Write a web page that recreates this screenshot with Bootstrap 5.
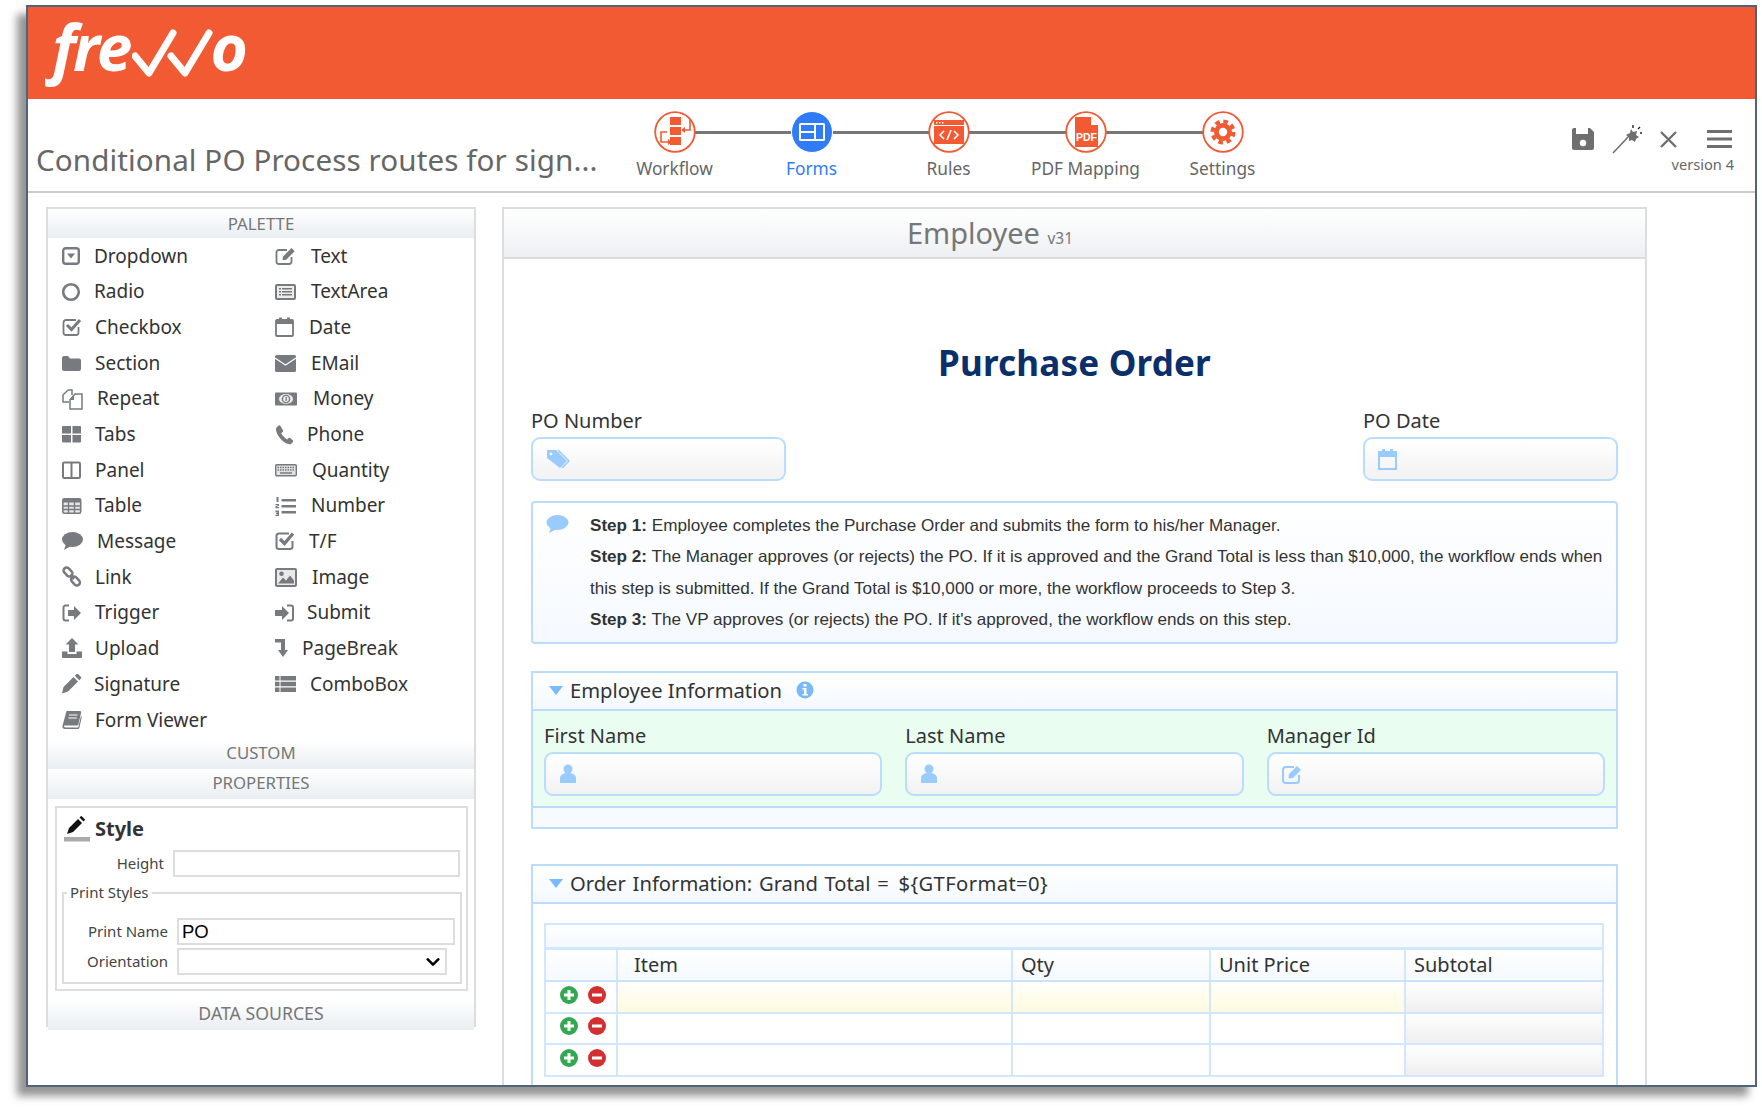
<!DOCTYPE html>
<html lang="en"><head><meta charset="utf-8"><title>frevvo</title>
<link href="https://cdn.jsdelivr.net/npm/bootstrap@5.3.0/dist/css/bootstrap.min.css" rel="stylesheet">
<style>
html,body{background:#fff;margin:0;height:1114px;overflow:hidden}
body{font-family:"Noto Sans",sans-serif;color:#333;padding:5px 5px 0 26px}
.appwin{height:1082px;width:1731px;border:2px solid #4f6379;box-shadow:-9px 9px 8px rgba(0,0,0,.42);background:#fff}
.brandbar{height:92px;background:#f15a33;padding:0 0 0 24px}
.logotxt{display:inline-block;font-family:"Open Sans",sans-serif;font-style:italic;font-weight:700;font-size:64px;line-height:80px;color:#fff;letter-spacing:-3px;padding:0 6px 0 8px;margin:0 -6px 0 -8px}
.logochecks{flex:none;margin:12px 0 0 3px}
.logoo{margin-left:-12px}
.toolbar{height:94px;border-bottom:2px solid #ccc;position:relative}
.flowtitle{font-size:29.6px;line-height:40px;color:#666;margin:41px 0 0 8px;width:569px;white-space:nowrap;letter-spacing:.1px}
.stepsrow{margin-left:1px;margin-top:12px}
.stepcell{width:137px;position:relative;text-align:center;color:#666;font-size:17.3px;line-height:24px}
.stepcell.activ{color:#2f7cf6}
.stepcell:not(:last-child)::before{content:"";position:absolute;left:68px;top:20px;width:137px;height:3px;background:#777}
.stepcirc{display:block;position:relative;margin:0 auto 4px;width:42px;height:42px}
.toolicons{margin-left:auto;padding-right:23px;width:183px;margin-top:26px}
.verlabel{font-size:14.6px;line-height:20px;color:#666;text-align:right;margin:-1px -2px 0 0}
.workarea{padding:14px 0 0 18px;height:892px;overflow:hidden}
.palpanel{width:430px;height:820px;border:2px solid #ddd;flex:none}
.panelhead{height:30px;line-height:28px;text-align:center;font-size:16.8px;color:#777;background:linear-gradient(#fff,#e9eef2)}
.palhead1{height:29px;line-height:30px}
.palgrid{display:grid;grid-template-columns:213px 200px;grid-auto-rows:35.7px;padding:0 0 3px 14px;height:502px}
.palitem{display:flex;align-items:center;font-size:19px;color:#333;white-space:nowrap}
.palitem svg{color:#777b7f;flex:none}
.palhead2{height:29px;line-height:26px}
.palhead3{height:30px;line-height:28px}
.palhead4{height:31px;line-height:28px;font-size:17.7px}
.stylebox{height:185px;margin:7px 6px 0 7px;border:2px solid #ddd;padding:8px 6px 0 7px}
.styletitle{font-weight:700;font-size:20px;line-height:26px;color:#333;height:34px}
.proplabel{font-size:15px;color:#444;text-align:right;flex:none}
.labh{width:100px}
.labp{width:104px}
.inh{width:287px}
.inp{width:278px;margin-left:9px}
.inq{width:270px;margin-left:9px}
.orow{margin-top:3px}
.propinput.form-control,.propsel.form-select{border:2px solid #ddd;border-radius:0;height:27px;min-height:0;padding:0 3px;font-family:"Liberation Sans",sans-serif;font-size:18.5px;color:#000;box-shadow:none}
.propsel.form-select{background-image:url("data:image/svg+xml,%3csvg xmlns='http://www.w3.org/2000/svg' viewBox='0 0 16 16'%3e%3cpath fill='none' stroke='%23000' stroke-width='3' stroke-linecap='round' stroke-linejoin='round' d='M2 5l6 6 6-6'/%3e%3c/svg%3e");background-size:14px 14px;background-position:right 5px center}
.prfield{border:2px solid #ddd;position:relative;margin:15px 0 0 -2px;height:92px;width:400px;padding-top:24px}
.prlegend{position:absolute;left:3px;top:-12px;background:#fff;padding:0 3px;font-size:15px;line-height:20px;color:#444}
.mainpanel{width:1145px;margin-left:26px;border:2px solid #ddd;border-bottom:0;height:1000px;padding:0 27px 0 27px;flex:none}
.mainhead{height:50px;margin:0 -27px 0 -27px;padding-right:169px;background:linear-gradient(#fff,#edf0f3);border-bottom:2px solid #ddd;line-height:48px;text-align:center;color:#777;font-size:29px}
.mainhead span{font-size:15.5px;margin-left:0}
.potitle{color:#0a2f6b;font-weight:700;font-size:35px;line-height:46px;text-align:center;margin-top:81px;letter-spacing:.2px}
.porow{margin-top:21px}
.fieldlabel{font-size:20px;line-height:28px;color:#333;margin-bottom:2px}
.bluebox.form-control{height:44px;border:2px solid #b9dcff;border-radius:9px;background:linear-gradient(#fff,#f2f2f2);padding:0 0 0 13px;display:flex;align-items:center;color:#9acbfd}
.pofield{width:255px}
.inforow{margin-top:20px;height:143px;border:2px solid #bcdcfb;border-radius:4px;background:linear-gradient(#fff,#f5f9ff);padding:7px 0 0 13px;color:#9acbfd}
.infotxt{font-family:"Liberation Sans",sans-serif;font-size:17.12px;line-height:31.4px;color:#333;margin-left:20px;white-space:nowrap}
.infotxt strong{font-weight:700}
.frmsec{border:2px solid #bcdcfb;border-radius:0}
.sec1{margin-top:27px;height:158px;background:linear-gradient(#fff,#f6faff)}
.sec2{margin-top:35px;height:260px;border-bottom:0;background:#fff}
.sechead{height:38px;border-bottom:2px solid #bcdcfb;background:linear-gradient(#fff,#f4f9ff);padding:0 0 2px 16px;font-size:20.2px;line-height:34px;color:#333}
.sechead2{word-spacing:1.5px}
.gtexpr{letter-spacing:.4px;margin-left:3px}
.sectri{width:0;height:0;border-left:7.5px solid transparent;border-right:7.5px solid transparent;border-top:9px solid #79bbf8;flex:none;margin-right:7px}
.infodot{margin-left:14px}
.greenbody{height:97px;background:#e9fdf0;border-bottom:2px solid #bcdcfb;padding:11px 11px 0 11px;gap:23px}
.greencol{flex:1 1 0}
.ordertbl{margin:19px 0 0 11px;width:1058px;table-layout:fixed;border-collapse:collapse;color:#333}
.ordertbl.table>:not(caption)>*>*{padding:0;border:2px solid #d2e7fc;background:transparent;box-shadow:none;vertical-align:middle}
.ordertbl .bandrow td{height:24px;background:linear-gradient(#fff,#f4f9ff);border-bottom-width:3px}
.ordertbl .headrow th{height:33px;font-weight:400;font-size:20px;line-height:28px;padding-left:16px;background:linear-gradient(#fff,#f4f9ff);border-bottom-color:#c9e3fd}
.ordertbl .headrow th.short{padding-left:8px}
.ordertbl td{height:31.5px}
.ordertbl td.yel{background:linear-gradient(#fffefa,#fffbe0)}
.ordertbl td.gry{background:linear-gradient(#fff,#efefef)}
.rowbtns{gap:10px;padding:0 0 4px 14px}
.cola{width:72px}.colb{width:395px}.colc{width:198px}.cold{width:195px}.cole{width:198px}
</style></head><body>
<div class="appwin">
 <div class="brandbar d-flex align-items-start">
  <span class="logotxt">fre</span>
  <svg width="82" height="60" class="logochecks"><path d="M3 37l14 17L41 14M39 37l14 17L77 14" fill="none" stroke="#fff" stroke-width="7" stroke-linecap="round" stroke-linejoin="round"/></svg>
  <span class="logotxt logoo">o</span>
 </div>
 <div class="toolbar d-flex">
  <div class="flowtitle">Conditional PO Process routes for sign...</div>
  <div class="stepsrow d-flex">
   <div class="stepcell"><svg class="stepcirc" viewBox="0 0 42 42"><circle cx="21" cy="21" r="19.8" fill="#fff" stroke="#f15a33" stroke-width="1.8"/><path fill="#f15a33" d="M16 6h11v8H16zM16 16h11v8H16zM16 26h11v8H16z"/><path fill="none" stroke="#f15a33" stroke-width="1.6" d="M13 21H7v10h8M36 9v10h-7"/><path fill="#f15a33" d="M14 28l4 3-4 3zM31 16l-4 3 4 3z"/></svg>Workflow</div>
   <div class="stepcell activ"><svg class="stepcirc" viewBox="0 0 42 42"><circle cx="21" cy="21" r="20.5" fill="#2f7cf6" stroke="#fff" stroke-width="1"/><rect x="8" y="12" width="26" height="18" rx="1.5" fill="#fff"/><path fill="#2f7cf6" d="M10 14h13v6H10zM10 22h13v6H10zM25 14h7v14h-7z"/></svg>Forms</div>
   <div class="stepcell"><svg class="stepcirc" viewBox="0 0 42 42"><circle cx="21" cy="21" r="19.8" fill="#fff" stroke="#f15a33" stroke-width="1.8"/><rect x="6" y="9" width="30" height="24" fill="#f15a33"/><path fill="#fff" d="M6 14h30v1H6zM8 11h1.5v1.5H8zM11 11h1.5v1.5H11zM14 11h1.5v1.5H14z"/><path fill="none" stroke="#fff" stroke-width="1.6" d="M16 20l-4 4 4 4M26 20l4 4-4 4M23 19l-4 10"/></svg>Rules</div>
   <div class="stepcell"><svg class="stepcirc" viewBox="0 0 42 42"><circle cx="21" cy="21" r="19.8" fill="#fff" stroke="#f15a33" stroke-width="1.8"/><path fill="#f15a33" d="M10 6h16l7 8v22H10z"/><path fill="#fff" d="M26 6v8h7z"/><text x="21.5" y="30" text-anchor="middle" font-family="Liberation Sans,sans-serif" font-weight="700" font-size="10.5" fill="#fff">PDF</text></svg>PDF Mapping</div>
   <div class="stepcell"><svg class="stepcirc" viewBox="0 0 42 42"><circle cx="21" cy="21" r="19.8" fill="#fff" stroke="#f15a33" stroke-width="1.8"/><circle cx="21" cy="21" r="9" fill="#f15a33"/><circle cx="21" cy="21" r="10.5" fill="none" stroke="#f15a33" stroke-width="4" stroke-dasharray="4.6 3.65"/><circle cx="21" cy="21" r="4.2" fill="#fff"/></svg>Settings</div>
  </div>
  <div class="toolicons">
   <div class="d-flex align-items-start">
    <svg width="41" height="30"><path fill="#6f6f6f" d="M2 3h16l4 4v16a2 2 0 0 1-2 2H2a2 2 0 0 1-2-2V5a2 2 0 0 1 2-2z"/><path fill="#fff" d="M4 3h12v6H4z"/><circle cx="11" cy="18" r="3.2" fill="#fff"/></svg>
    <svg width="49" height="30"><path stroke="#6f6f6f" stroke-width="1.6" d="M1 28l17-18"/><path fill="#6f6f6f" d="M19 4l2 3 4-1-1 4 3 2-3 2-1 3-3-2-3 1 0-4-3-2 4-2z"/><path stroke="#222" stroke-width="1.4" d="M21 0v3M26 4l2-2M28 8h2"/></svg>
    <svg width="48" height="30"><path stroke="#6f6f6f" stroke-width="2.4" d="M1 7l15 15M16 7L1 22"/></svg>
    <svg width="26" height="30"><path fill="#6f6f6f" d="M0 5h26v3H0zM0 12.5h26v3H0zM0 20h26v3H0z"/></svg>
   </div>
   <div class="verlabel">version 4</div>
  </div>
 </div>
 <div class="workarea d-flex align-items-start">
  <div class="palpanel">
   <div class="panelhead palhead1">PALETTE</div>
   <div class="palgrid">
    <div class="palitem"><svg width="32" height="22"><rect x="1.2" y="3.2" width="15.6" height="15.6" rx="2.5" fill="none" stroke="currentColor" stroke-width="2.4"/><path fill="currentColor" d="M5 8.5h8l-4 5z"/></svg>Dropdown</div>
    <div class="palitem"><svg width="36" height="22"><path fill="none" stroke="currentColor" stroke-width="1.8" d="M12 5H4a2.500 2.500 0 0 0-2.500 2.500v9A2.500 2.500 0 0 0 4 19h10a2.500 2.500 0 0 0 2.500-2.500V12"/><path fill="currentColor" d="M8 11.500 16.500 3l3.200 3.200-8.500 8.500-3.700.6z"/></svg>Text</div>
    <div class="palitem"><svg width="32" height="22"><circle cx="9" cy="11" r="7.800" fill="none" stroke="currentColor" stroke-width="2.600"/></svg>Radio</div>
    <div class="palitem"><svg width="36" height="22"><rect y="3" width="21" height="16" rx="2" fill="currentColor"/><rect x="2" y="5" width="17" height="12" fill="#ececec"/><path fill="currentColor" d="M4 7h2v1.500H4zM7 7h10v1.500H7zM4 10h2v1.500H4zM7 10h10v1.500H7zM4 13h2v1.500H4zM7 13h10v1.500H7z"/></svg>TextArea</div>
    <div class="palitem"><svg width="33" height="22"><path fill="none" stroke="currentColor" stroke-width="1.800" d="M14 4H4a2.500 2.500 0 0 0-2.500 2.500v10A2.500 2.500 0 0 0 4 19h10a2.500 2.500 0 0 0 2.500-2.500V11"/><path fill="none" stroke="currentColor" stroke-width="3" d="M5 9l4.500 4.500L18 4"/></svg>Checkbox</div>
    <div class="palitem"><svg width="34" height="22"><rect x="1" y="4" width="17" height="16" rx="1" fill="none" stroke="currentColor" stroke-width="1.800"/><path fill="currentColor" d="M1 4h17v4H1zM4 1.500h3V6H4zM12 1.500h3V6h-3z"/></svg>Date</div>
    <div class="palitem"><svg width="33" height="22"><path fill="currentColor" d="M0 6a2 2 0 0 1 2-2h4l2 2.500h9a2 2 0 0 1 2 2V17a2 2 0 0 1-2 2H2a2 2 0 0 1-2-2z"/></svg>Section</div>
    <div class="palitem"><svg width="36" height="22"><rect y="3" width="21" height="17" rx="1.500" fill="currentColor"/><path fill="none" stroke="#fff" stroke-width="1.100" d="M0 6l10.500 7L21 6"/></svg>EMail</div>
    <div class="palitem"><svg width="35" height="22"><path fill="none" stroke="currentColor" stroke-width="1.500" d="M6 2h4v5M6 2L1 7v7h6"/><path fill="#fff" stroke="currentColor" stroke-width="1.500" d="M13 6h7v15H8v-9z"/><path fill="currentColor" d="M7 12h5V6.500z"/></svg>Repeat</div>
    <div class="palitem"><svg width="38" height="22"><rect y="4.500" width="22" height="13" rx="1" fill="currentColor"/><ellipse cx="11" cy="11" rx="7" ry="5" fill="#ececec"/><circle cx="11" cy="11" r="3.600" fill="none" stroke="currentColor" stroke-width="1.400"/><path fill="currentColor" d="M10.500 9h1.300v4h-1.300z"/></svg>Money</div>
    <div class="palitem"><svg width="33" height="22"><path fill="currentColor" d="M1 3h8v7.500H0V4a1 1 0 0 1 1-1zM10.500 3H18a1 1 0 0 1 1 1v6.500h-8.500zM0 12h9v7.500H1a1 1 0 0 1-1-1zM10.500 12H19v6.500a1 1 0 0 1-1 1h-7.500z"/></svg>Tabs</div>
    <div class="palitem"><svg width="32" height="22"><path fill="currentColor" d="M3.500 2.500 1.500 4.500c-1 1.500-.5 4 1 7 2 3.800 5.500 7.300 9 9 1.800.8 3.300 1 4.500.5l2-2c.5-.6.3-1.200-.3-1.800l-2.500-2.200c-.8-.5-1.400-.3-2 .3l-1 1.200c-2.500-1.500-4.500-3.500-6-6.200L7.500 9c.7-.6.8-1.300.3-2.100L5.500 3c-.6-.8-1.300-1-2-.5z"/></svg>Phone</div>
    <div class="palitem"><svg width="33" height="22"><rect x="1" y="3.500" width="17" height="15.500" rx="1.200" fill="none" stroke="currentColor" stroke-width="2"/><path stroke="currentColor" stroke-width="2" d="M9.500 4v15"/></svg>Panel</div>
    <div class="palitem"><svg width="37" height="22"><rect x=".7" y="5.700" width="20.600" height="11" rx="1" fill="#e2e2e2" stroke="currentColor" stroke-width="1.400"/><path stroke="currentColor" stroke-width="1.500" stroke-dasharray="1.500 1" d="M2.500 8.500h17M2.500 11h17"/><path stroke="currentColor" stroke-width="1.500" d="M5 14h12"/></svg>Quantity</div>
    <div class="palitem"><svg width="33" height="22"><rect x=".8" y="3.800" width="17.900" height="14.400" rx="1.500" fill="#e6e6e6" stroke="currentColor" stroke-width="1.600"/><path fill="currentColor" d="M1 4h18v3.500H1z"/><path stroke="currentColor" stroke-width="1.400" d="M1 11h18M1 14.500h18M6.500 4v14M12.500 4v14"/></svg>Table</div>
    <div class="palitem"><svg width="36" height="22"><path fill="currentColor" d="M6.500 4h14.500v2.500H6.500zM6.500 10h14.500v2.500H6.500zM6.500 16h14.500v2.500H6.500zM1.500 2h2v5h-2zM.5 9h3.500v2H2.500v1H4v1.300H.5V11h2v-.7H.5zM.5 15.500H4V21H.5v-1.200h2v-.7h-1.500v-1h1.500v-.5h-2z"/></svg>Number</div>
    <div class="palitem"><svg width="35" height="22"><ellipse cx="10.500" cy="9.500" rx="10.500" ry="7.500" fill="currentColor"/><path fill="currentColor" d="M4 14 2 20l7-4z"/></svg>Message</div>
    <div class="palitem"><svg width="34" height="22"><path fill="none" stroke="currentColor" stroke-width="2" d="M14 3.500H4a2.500 2.500 0 0 0-2.500 2.500v10.500A2.500 2.500 0 0 0 4 19h11a2.500 2.500 0 0 0 2.500-2.500V11"/><path fill="none" stroke="currentColor" stroke-width="3.400" d="M5 9l4.500 4.500L18 3.500"/></svg>T/F</div>
    <div class="palitem"><svg width="33" height="22"><g fill="none" stroke="currentColor" stroke-width="2.500"><rect x="-5" y="-3" width="10" height="6" rx="3" transform="translate(6 6) rotate(45)"/><rect x="-5" y="-3" width="10" height="6" rx="3" transform="translate(13.500 15) rotate(45)"/></g><path stroke="currentColor" stroke-width="2.500" d="M8 9l4 4"/></svg>Link</div>
    <div class="palitem"><svg width="37" height="22"><rect x="1" y="3" width="20" height="17" rx="1" fill="#e9e9e9" stroke="currentColor" stroke-width="2"/><path fill="currentColor" d="M3 17.500l5-6 3 3 4-5 4 5v3zM6.500 5.500a2.300 2.300 0 1 1 0 4.600 2.300 2.300 0 0 1 0-4.600z"/></svg>Image</div>
    <div class="palitem"><svg width="33" height="22"><path fill="none" stroke="currentColor" stroke-width="2" d="M7 3.500H3.500a2 2 0 0 0-2 2v11a2 2 0 0 0 2 2H7"/><path fill="currentColor" d="M6 8h6V4l7 7-7 7v-4H6z"/></svg>Trigger</div>
    <div class="palitem"><svg width="32" height="22"><path fill="currentColor" d="M0 8h7V4l7 7-7 7v-4H0z"/><path fill="none" stroke="currentColor" stroke-width="2" d="M12 3.500h4a2 2 0 0 1 2 2v11a2 2 0 0 1-2 2h-4"/></svg>Submit</div>
    <div class="palitem"><svg width="33" height="22"><path fill="currentColor" d="M10 1l6.500 6.500H13V15H7V7.500H3.500zM0 14.500h5.500V17h9v-2.500H20V20a1 1 0 0 1-1 1H1a1 1 0 0 1-1-1z"/></svg>Upload</div>
    <div class="palitem"><svg width="27" height="22"><path fill="currentColor" d="M0 2h10v11h3l-5 7-5-7h3V5.500H0z"/></svg>PageBreak</div>
    <div class="palitem"><svg width="32" height="22"><path fill="currentColor" d="M0 20.500 1.500 14 11.500 4 16 8.500 6 18.500zM12.800 2.700l1.500-1.500a1.400 1.400 0 0 1 2 0l2.500 2.500a1.400 1.400 0 0 1 0 2L17.300 7.200z"/></svg>Signature</div>
    <div class="palitem"><svg width="35" height="22"><path fill="currentColor" d="M0 3h4.500v4.500H0zM5.500 3H21v4.500H5.500zM0 8.800h4.500v4.500H0zM5.500 8.800H21v4.500H5.500zM0 14.500h4.500V19H0zM5.500 14.500H21V19H5.500z"/></svg>ComboBox</div>
    <div class="palitem"><svg width="33" height="22"><path fill="currentColor" d="M4.500 2H18c1.200 0 1.300 1 1.100 1.800L16.500 15c-.3 1-1 1.500-2 1.500H3.200c-1 0-1.400.6-1.200 1.100.2.500.8.800 1.500.8h12.700L19 7l.8 1-2.500 11c-.2.600-.7 1-1.500 1H3c-2 0-3-1.500-2.500-3.200z"/><path stroke="#fff" stroke-width="1" d="M7 6h8.500M6.300 9h8.500"/></svg>Form Viewer</div>
   </div>
   <div class="panelhead palhead2">CUSTOM</div>
   <div class="panelhead palhead3">PROPERTIES</div>
   <div class="stylebox">
    <div class="styletitle d-flex align-items-start"><svg width="31" height="26" class="flex-shrink-0"><path fill="#111" d="M3 18 5 12l9-9 4 4-9 9zM15.500 1.500l1-1a1 1 0 0 1 1.500 0l2.500 2.500a1 1 0 0 1 0 1.500l-1 1z"/><rect y="21" width="26" height="4.500" fill="#aaa"/></svg>Style</div>
    <div class="d-flex align-items-center"><div class="proplabel labh">Height</div><input class="form-control propinput ms-auto inh" aria-label="Height"></div>
    <div class="prfield">
     <div class="prlegend">Print Styles</div>
     <div class="d-flex align-items-center"><div class="proplabel labp">Print Name</div><input class="form-control propinput inp" value="PO" aria-label="Print Name"></div>
     <div class="d-flex align-items-center orow"><div class="proplabel labp">Orientation</div><select class="form-select propsel inq" aria-label="Orientation"><option></option></select></div>
    </div>
   </div>
   <div class="panelhead palhead4 mt-2">DATA SOURCES</div>
  </div>
  <div class="mainpanel">
   <div class="mainhead">Employee <span>v31</span></div>
   <div class="potitle">Purchase Order</div>
   <div class="d-flex justify-content-between porow">
    <div class="pofield"><div class="fieldlabel">PO Number</div><div class="form-control bluebox"><svg width="24" height="20"><path fill="currentColor" d="M1 1h9l11 11-7 7L1 9z"/><circle cx="5" cy="5" r="1.400" fill="#fff"/><path fill="none" stroke="currentColor" stroke-width="1.500" d="M12 1l11 11-7 7"/></svg></div></div>
    <div class="pofield"><div class="fieldlabel">PO Date</div><div class="form-control bluebox"><svg width="20" height="22"><rect x="1" y="4" width="17" height="17" fill="none" stroke="currentColor" stroke-width="2"/><path fill="currentColor" d="M1 4h17v5H1zM4 1h3v5H4zM12 1h3v5h-3z"/></svg></div></div>
   </div>
   <div class="inforow d-flex">
    <svg width="24" height="22" class="flex-shrink-0 mt-1"><ellipse cx="11.500" cy="8.500" rx="11" ry="7.500" fill="currentColor"/><path fill="currentColor" d="M5 13 3 19l8-4z"/></svg>
    <div class="infotxt"><strong>Step 1:</strong> Employee completes the Purchase Order and submits the form to his/her Manager.<br><strong>Step 2:</strong> The Manager approves (or rejects) the PO. If it is approved and the Grand Total is less than $10,000, the workflow ends when<br>this step is submitted. If the Grand Total is $10,000 or more, the workflow proceeds to Step 3.<br><strong>Step 3:</strong> The VP approves (or rejects) the PO. If it's approved, the workflow ends on this step.</div>
   </div>
   <div class="frmsec sec1">
    <div class="sechead d-flex align-items-center"><span class="sectri"></span>Employee Information<svg width="18" height="18" class="infodot"><circle cx="9" cy="9" r="8.500" fill="#79b9f5"/><path fill="#fff" d="M7.500 3h3v2.500h-3zM6.500 7h4v6h1.500v1.500H6.500V13H8V8.500H6.500z"/></svg></div>
    <div class="greenbody d-flex">
     <div class="greencol"><div class="fieldlabel">First Name</div><div class="form-control bluebox"><svg width="18" height="20"><circle cx="9" cy="5" r="4.500" fill="currentColor"/><path fill="currentColor" d="M1 19v-5c0-3 3-5 8-5s8 2 8 5v5z"/></svg></div></div>
     <div class="greencol"><div class="fieldlabel">Last Name</div><div class="form-control bluebox"><svg width="18" height="20"><circle cx="9" cy="5" r="4.500" fill="currentColor"/><path fill="currentColor" d="M1 19v-5c0-3 3-5 8-5s8 2 8 5v5z"/></svg></div></div>
     <div class="greencol"><div class="fieldlabel">Manager Id</div><div class="form-control bluebox"><svg width="22" height="20"><path fill="none" stroke="currentColor" stroke-width="2" d="M12 3H4a3 3 0 0 0-3 3v10a3 3 0 0 0 3 3h10a3 3 0 0 0 3-3v-5"/><path fill="currentColor" d="M7 10 15 2l4 4-8 8-4.500.6z"/></svg></div></div>
    </div>
   </div>
   <div class="frmsec sec2">
    <div class="sechead sechead2 d-flex align-items-center"><span class="sectri"></span><span>Order Information: Grand Total = <span class="gtexpr">${GTFormat=0}</span></span></div>
    <table class="table ordertbl mb-0">
     <colgroup><col class="cola"><col class="colb"><col class="colc"><col class="cold"><col class="cole"></colgroup>
     <tbody>
      <tr class="bandrow"><td colspan="5"></td></tr>
      <tr class="headrow"><th></th><th>Item</th><th class="short">Qty</th><th class="short">Unit Price</th><th class="short">Subtotal</th></tr>
      <tr><td><div class="d-flex rowbtns"><svg width="18" height="18"><circle cx="9" cy="9" r="9" fill="#32a852"/><path fill="#fff" d="M7.500 4h3v3.500H14v3h-3.500V14h-3v-3.500H4v-3h3.500z"/></svg><svg width="18" height="18"><circle cx="9" cy="9" r="9" fill="#d32f2f"/><path fill="#fff" d="M4 7.500h10v3H4z"/></svg></div></td><td class="yel"></td><td class="yel"></td><td class="yel"></td><td class="gry"></td></tr>
      <tr><td><div class="d-flex rowbtns"><svg width="18" height="18"><circle cx="9" cy="9" r="9" fill="#32a852"/><path fill="#fff" d="M7.500 4h3v3.500H14v3h-3.500V14h-3v-3.500H4v-3h3.500z"/></svg><svg width="18" height="18"><circle cx="9" cy="9" r="9" fill="#d32f2f"/><path fill="#fff" d="M4 7.500h10v3H4z"/></svg></div></td><td></td><td></td><td></td><td class="gry"></td></tr>
      <tr><td><div class="d-flex rowbtns"><svg width="18" height="18"><circle cx="9" cy="9" r="9" fill="#32a852"/><path fill="#fff" d="M7.500 4h3v3.500H14v3h-3.500V14h-3v-3.500H4v-3h3.500z"/></svg><svg width="18" height="18"><circle cx="9" cy="9" r="9" fill="#d32f2f"/><path fill="#fff" d="M4 7.500h10v3H4z"/></svg></div></td><td></td><td></td><td></td><td class="gry"></td></tr>
     </tbody>
    </table>
   </div>
  </div>
 </div>
</div>
<script src="https://cdn.jsdelivr.net/npm/bootstrap@5.3.0/dist/js/bootstrap.bundle.min.js"></script>
</body></html>
